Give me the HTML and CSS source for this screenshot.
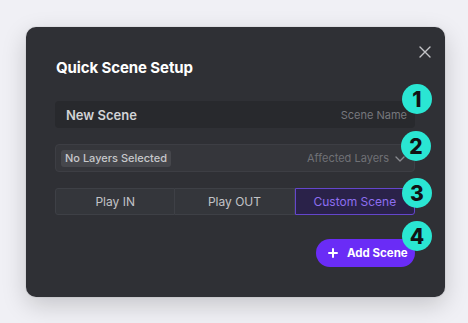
FILE: index.html
```html
<!DOCTYPE html>
<html>
<head>
<meta charset="utf-8">
<link rel="stylesheet" href="styles.css">
</head>
<body>
<div class="modal">
  <button class="close" aria-label="Close">
    <svg width="12" height="12" viewBox="0 0 12 12"><path d="M1 1L11 11M11 1L1 11" stroke="#c4c4c8" stroke-width="1.4" stroke-linecap="round"/></svg>
  </button>
  <h1 class="title">Quick Scene Setup</h1>
  <div class="row field-name">
    <span class="name-value">New Scene</span>
    <span class="hint">Scene Name</span>
    <span class="badge b1">1</span>
  </div>
  <div class="row field-layers">
    <span class="chip">No Layers Selected</span>
    <span class="hint">Affected Layers
      <svg class="chev" width="10" height="6" viewBox="0 0 10 6"><path d="M1 1L5 5L9 1" fill="none" stroke="#8a8b90" stroke-width="1.3" stroke-linecap="round" stroke-linejoin="round"/></svg>
    </span>
    <span class="badge b2">2</span>
  </div>
  <div class="row segmented">
    <span class="seg">Play IN</span>
    <span class="seg">Play OUT</span>
    <span class="seg active">Custom Scene</span>
    <span class="badge b3">3</span>
  </div>
  <div class="actions">
    <button class="add">
      <svg width="10" height="10" viewBox="0 0 10 10"><path d="M5 1V9M1 5H9" stroke="#fff" stroke-width="2" stroke-linecap="round"/></svg>
      <span>Add Scene</span>
      <span class="badge b4">4</span>
    </button>
  </div>
</div>
</body>
</html>
```
FILE: styles.css
```css
* { box-sizing: border-box; }
html, body { margin: 0; }
body {
  width: 468px;
  height: 323px;
  background: #f0f0f5;
  font-family: Inter, "Noto Sans", sans-serif;
  padding: 27px 23px 26px 26px;
  overflow: hidden;
}
.modal {
  position: relative;
  width: 419px;
  height: 270px;
  background: #2f3035;
  border-radius: 10px;
  box-shadow: 0 8px 24px rgba(0,0,0,0.18), 0 0 0 1px rgba(0,0,0,0.04);
  padding: 31px 30px 0 29px;
  display: flex;
  flex-direction: column;
}
.close {
  position: absolute;
  top: 18px;
  right: 13px;
  width: 14px;
  height: 14px;
  padding: 0;
  border: 0;
  background: none;
  display: flex;
  align-items: center;
  justify-content: center;
}
.title {
  margin: 0 0 23px 1px;
  font-size: 15px;
  line-height: 20px;
  font-weight: 700;
  color: #ffffff;
  letter-spacing: -0.1px;
}
.row {
  position: relative;
  display: flex;
  align-items: center;
  width: 360px;
}
.field-name {
  height: 27px;
  background: #28292d;
  border-radius: 4px;
  padding: 0 8px 0 11px;
  justify-content: space-between;
  margin-bottom: 16px;
}
.name-value {
  color: #d2d3d6;
  font-size: 13px;
  font-weight: 600;
}
.hint {
  color: #77787d;
  font-size: 11px;
  display: flex;
  align-items: center;
  gap: 6px;
}
.field-layers {
  height: 28px;
  background: #35363b;
  border: 1px solid #3d3e44;
  border-radius: 4px;
  padding: 0 9px 0 5px;
  justify-content: space-between;
  margin-bottom: 16px;
}
.field-layers .hint { color: #707176; }
.chip {
  background: #46474c;
  color: #c7c8cb;
  font-size: 11px;
  font-weight: 500;
  padding: 2px 4px;
  border-radius: 3px;
  line-height: 13px;
}
.chev { margin-top: 1px; }
.segmented {
  height: 27px;
  margin-bottom: 24px;
}
.seg {
  flex: 1;
  height: 100%;
  display: flex;
  align-items: center;
  justify-content: center;
  background: #34363b;
  border: 1px solid #3e4046;
  color: #c2c3c7;
  font-size: 12px;
}
.seg:first-child { border-radius: 3px 0 0 3px; }
.seg + .seg { border-left: 0; }
.seg.active {
  background: #2a2249;
  border: 1px solid #6446cc;
  color: #8d6ef0;
  border-radius: 0 3px 3px 0;
}
.actions {
  width: 360px;
  display: flex;
  justify-content: flex-end;
}
.add {
  position: relative;
  height: 28px;
  width: 99px;
  border: 0;
  border-radius: 14px;
  background: #6a2cf6;
  color: #ffffff;
  font-family: inherit;
  font-size: 11.5px;
  font-weight: 700;
  display: flex;
  align-items: center;
  padding: 0 0 0 12px;
  gap: 9px;
}
.badge {
  position: absolute;
  right: -17px;
  width: 30px;
  height: 30px;
  border-radius: 50%;
  background: #2ae6d3;
  color: #111214;
  font-size: 21px;
  font-weight: 800;
  display: flex;
  align-items: center;
  justify-content: center;
  line-height: 1;
}
.b1 { top: -17px; }
.b2 { top: -14px; }
.b3 { top: -10px; }
.b4 { top: -18px; }
```
